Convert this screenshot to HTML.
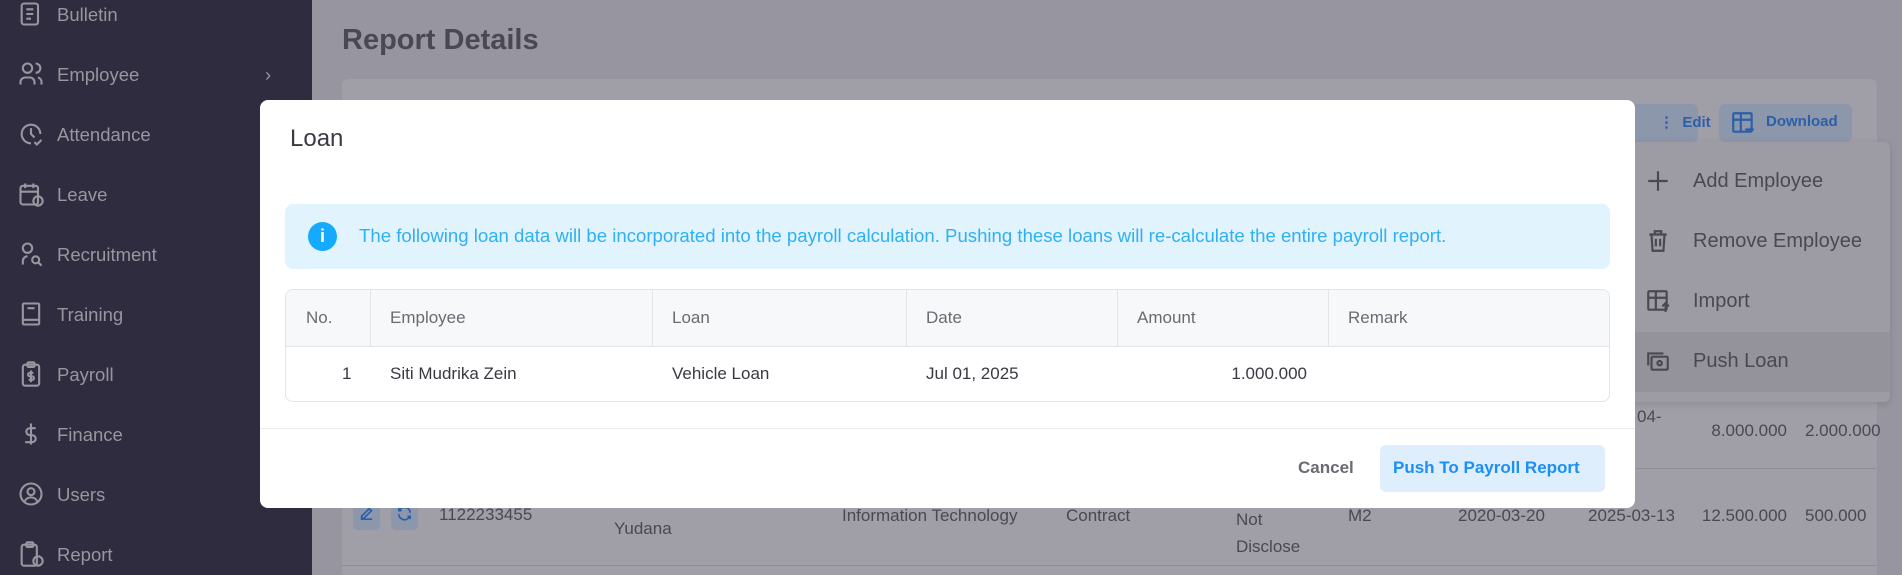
<!DOCTYPE html>
<html><head><meta charset="utf-8"><style>
*{box-sizing:border-box;margin:0;padding:0}
html{width:1902px;height:575px;overflow:hidden}
body{width:1902px;height:575px;overflow:hidden;position:relative;background:#97959f;font-family:"Liberation Sans",sans-serif}
.sb{position:absolute;left:0;top:0;width:312px;height:575px;background:#302c40}
.si{position:absolute;left:0;height:30px;width:312px;color:#98969f;font-size:18.5px}
.si svg{position:absolute;left:17px;top:0px}
.si span{position:absolute;left:57px;top:4px}
.abs{position:absolute}
.card{left:342px;top:79px;width:1535px;height:496px;background:#a09ea7;border-radius:6px 6px 0 0}
.modal{left:260px;top:100px;width:1375px;height:408px;background:#fff;border-radius:8px}
.t{position:absolute;white-space:nowrap}
</style></head><body>
<div class="sb">
<div class="si" style="top:0"><svg width="28" height="28" viewBox="0 0 24 24" fill="none" stroke="#98969f" stroke-width="1.8"><rect x="4" y="3" width="14" height="18" rx="2"/><path d="M8 8h6M8 12h6M8 16h4"/></svg><span>Bulletin</span></div>
<div class="si" style="top:60px"><svg width="28" height="28" viewBox="0 0 24 24" fill="none" stroke="#98969f" stroke-width="1.8"><circle cx="9" cy="7" r="4"/><path d="M3 21v-2a4 4 0 014-4h4a4 4 0 014 4v2M16 3a4 4 0 010 8M21 21v-2a4 4 0 00-3-4"/></svg><span>Employee</span><span style="left:265px">›</span></div>
<div class="si" style="top:120px"><svg width="28" height="28" viewBox="0 0 24 24" fill="none" stroke="#98969f" stroke-width="1.8"><path d="M20 12a8 8 0 10-8 8M12 7v5l3 3M15 19l2 2 4-4"/></svg><span>Attendance</span></div>
<div class="si" style="top:180px"><svg width="28" height="28" viewBox="0 0 24 24" fill="none" stroke="#98969f" stroke-width="1.8"><rect x="3" y="5" width="15" height="16" rx="2"/><path d="M3 10h15M7 3v4M14 3v4"/><circle cx="18" cy="18" r="4"/></svg><span>Leave</span></div>
<div class="si" style="top:240px"><svg width="28" height="28" viewBox="0 0 24 24" fill="none" stroke="#98969f" stroke-width="1.8"><circle cx="9" cy="7" r="4"/><path d="M5 21v-3a4 4 0 014-4"/><circle cx="16" cy="17" r="3"/><path d="M18 19l3 3"/></svg><span>Recruitment</span></div>
<div class="si" style="top:300px"><svg width="28" height="28" viewBox="0 0 24 24" fill="none" stroke="#98969f" stroke-width="1.8"><rect x="5" y="3" width="14" height="18" rx="1"/><path d="M5 17h14M9 7h6"/></svg><span>Training</span></div>
<div class="si" style="top:360px"><svg width="28" height="28" viewBox="0 0 24 24" fill="none" stroke="#98969f" stroke-width="1.8"><rect x="5" y="4" width="14" height="18" rx="2"/><rect x="9" y="2" width="6" height="4" rx="1"/><path d="M14 11h-3a1.5 1.5 0 000 3h2a1.5 1.5 0 010 3h-3M12 9v10"/></svg><span>Payroll</span></div>
<div class="si" style="top:420px"><svg width="28" height="28" viewBox="0 0 24 24" fill="none" stroke="#98969f" stroke-width="1.8"><path d="M16 7h-5a3 3 0 000 6h2a3 3 0 010 6H7M12 3v18"/></svg><span>Finance</span></div>
<div class="si" style="top:480px"><svg width="28" height="28" viewBox="0 0 24 24" fill="none" stroke="#98969f" stroke-width="1.8"><circle cx="12" cy="12" r="9"/><circle cx="12" cy="10" r="3"/><path d="M6.5 18.5a6 6 0 0111 0"/></svg><span>Users</span></div>
<div class="si" style="top:540px"><svg width="28" height="28" viewBox="0 0 24 24" fill="none" stroke="#98969f" stroke-width="1.8"><rect x="4" y="4" width="13" height="18" rx="2"/><rect x="8" y="2" width="6" height="4" rx="1"/><circle cx="18" cy="18" r="4"/></svg><span>Report</span></div>
</div>

<div class="t" style="left:342px;top:24px;font-size:29px;font-weight:bold;color:#4a4852">Report Details</div>
<div class="abs card"></div>
<div class="abs" style="left:1605px;top:104px;width:93px;height:38px;background:#8d97ab;border-radius:6px"></div>
<div class="t" style="left:1659px;top:113px;font-size:15px;font-weight:bold;color:#2b5fa8">⋮ &nbsp;Edit</div>
<div class="abs" style="left:1719px;top:104px;width:133px;height:38px;background:#8d97ab;border-radius:6px"></div>
<svg class="abs" style="left:1730px;top:110px" width="26" height="26" viewBox="0 0 24 24" fill="none" stroke="#2b5fa8" stroke-width="2"><rect x="3" y="3" width="17" height="17" rx="1"/><path d="M3 9h17M10 3v17M14 18h7M19 16l2 2-2 2"/></svg>
<div class="t" style="left:1766px;top:113px;font-size:15px;font-weight:bold;color:#2b5fa8">Download</div>
<div class="abs" style="left:1600px;top:142px;width:290px;height:260px;background:#9d9ba4;border-radius:6px;box-shadow:0 2px 8px rgba(0,0,0,.12)"></div>
<div class="abs" style="left:1600px;top:332px;width:290px;height:60px;background:#94929b"></div>
<svg class="abs" style="left:1645px;top:168px" width="26" height="26" viewBox="0 0 24 24" fill="none" stroke="#4a4852" stroke-width="2"><path d="M12 3v18M3 12h18"/></svg>
<svg class="abs" style="left:1645px;top:228px" width="26" height="26" viewBox="0 0 24 24" fill="none" stroke="#4a4852" stroke-width="2"><path d="M4 6h16M9 6V3h6v3M6 6l1 15h10l1-15M10 10v7M14 10v7"/></svg>
<svg class="abs" style="left:1645px;top:288px" width="26" height="26" viewBox="0 0 24 24" fill="none" stroke="#4a4852" stroke-width="2"><rect x="3" y="3" width="17" height="17" rx="1"/><path d="M3 9h17M10 3v17M19 22v-7M16 17l3-3 3 3"/></svg>
<svg class="abs" style="left:1645px;top:348px" width="26" height="26" viewBox="0 0 24 24" fill="none" stroke="#4a4852" stroke-width="2"><rect x="6" y="8" width="15" height="12" rx="1"/><path d="M3 16V5h14"/><circle cx="13.5" cy="14" r="2"/></svg>
<div class="t" style="left:1693px;top:170px;font-size:20px;color:#4a4852">Add Employee</div>
<div class="t" style="left:1693px;top:230px;font-size:20px;color:#4a4852">Remove Employee</div>
<div class="t" style="left:1693px;top:290px;font-size:20px;color:#4a4852">Import</div>
<div class="t" style="left:1693px;top:350px;font-size:20px;color:#4a4852">Push Loan</div>

<div class="t" style="left:1637px;top:407px;font-size:17px;color:#4a4852">04-</div>
<div class="t" style="left:1787px;top:421px;font-size:17px;color:#4a4852;transform:translateX(-100%)">8.000.000</div>
<div class="t" style="left:1805px;top:421px;font-size:17px;color:#4a4852">2.000.000</div>
<div class="abs" style="left:1636px;top:468px;width:241px;height:1px;background:#8e8c95"></div>
<div class="abs" style="left:342px;top:565px;width:1535px;height:1px;background:#8e8c95"></div>
<div class="abs" style="left:353px;top:500px;width:27px;height:30px;background:#8d97ab;border-radius:5px"></div>
<svg class="abs" style="left:358px;top:505px" width="17" height="17" viewBox="0 0 24 24" fill="none" stroke="#2b5fa8" stroke-width="2.4"><path d="M4 20h16M5 16l11-11 3 3-11 11H5z"/></svg>
<div class="abs" style="left:391px;top:500px;width:27px;height:30px;background:#8d97ab;border-radius:5px"></div>
<svg class="abs" style="left:396px;top:505px" width="17" height="17" viewBox="0 0 24 24" fill="none" stroke="#2b5fa8" stroke-width="2.4"><path d="M20 11a8 8 0 00-14-5l-2 2M4 13a8 8 0 0014 5l2-2M4 4v4h4M20 20v-4h-4"/></svg>
<div class="t" style="left:439px;top:505px;font-size:17px;color:#4a4852">1122233455</div>
<div class="t" style="left:614px;top:519px;font-size:17px;color:#4a4852">Yudana</div>
<div class="t" style="left:842px;top:506px;font-size:17px;color:#4a4852">Information Technology</div>
<div class="t" style="left:1066px;top:506px;font-size:17px;color:#4a4852">Contract</div>
<div class="t" style="left:1236px;top:506px;font-size:17px;color:#4a4852;line-height:27px">Not<br>Disclose</div>
<div class="t" style="left:1348px;top:506px;font-size:17px;color:#4a4852">M2</div>
<div class="t" style="left:1458px;top:506px;font-size:17px;color:#4a4852">2020-03-20</div>
<div class="t" style="left:1588px;top:506px;font-size:17px;color:#4a4852">2025-03-13</div>
<div class="t" style="left:1787px;top:506px;font-size:17px;color:#4a4852;transform:translateX(-100%)">12.500.000</div>
<div class="t" style="left:1805px;top:506px;font-size:17px;color:#4a4852">500.000</div>

<div class="abs modal">
<div class="t" style="left:30px;top:25px;font-size:24px;color:#3c3a44">Loan</div>
<div class="abs" style="left:25px;top:104px;width:1325px;height:65px;background:#e1f3fd;border-radius:8px"></div>
<div class="abs" style="left:48px;top:122px;width:29px;height:29px;border-radius:50%;background:#16aaff;color:#fff;font-weight:bold;font-size:18px;text-align:center;line-height:29px">i</div>
<div class="t" style="left:99px;top:125px;font-size:18.6px;color:#2fb0f4">The following loan data will be incorporated into the payroll calculation. Pushing these loans will re-calculate the entire payroll report.</div>
<div class="abs" style="left:25px;top:189px;width:1325px;height:113px;border:1px solid #e3e4e8;border-radius:8px;overflow:hidden">
 <div class="abs" style="left:0;top:0;width:1325px;height:57px;background:#f7f8fa;border-bottom:1px solid #e3e4e8"></div>
 <div class="abs" style="left:84px;top:0;width:1px;height:57px;background:#e3e4e8"></div>
 <div class="abs" style="left:366px;top:0;width:1px;height:57px;background:#e3e4e8"></div>
 <div class="abs" style="left:620px;top:0;width:1px;height:57px;background:#e3e4e8"></div>
 <div class="abs" style="left:831px;top:0;width:1px;height:57px;background:#e3e4e8"></div>
 <div class="abs" style="left:1042px;top:0;width:1px;height:57px;background:#e3e4e8"></div>
 <div class="t" style="left:20px;top:18px;font-size:17px;color:#6b6a72">No.</div>
 <div class="t" style="left:104px;top:18px;font-size:17px;color:#6b6a72">Employee</div>
 <div class="t" style="left:386px;top:18px;font-size:17px;color:#6b6a72">Loan</div>
 <div class="t" style="left:640px;top:18px;font-size:17px;color:#6b6a72">Date</div>
 <div class="t" style="left:851px;top:18px;font-size:17px;color:#6b6a72">Amount</div>
 <div class="t" style="left:1062px;top:18px;font-size:17px;color:#6b6a72">Remark</div>
 <div class="t" style="left:56px;top:74px;font-size:17px;color:#3a3841">1</div>
 <div class="t" style="left:104px;top:74px;font-size:17px;color:#3a3841">Siti Mudrika Zein</div>
 <div class="t" style="left:386px;top:74px;font-size:17px;color:#3a3841">Vehicle Loan</div>
 <div class="t" style="left:640px;top:74px;font-size:17px;color:#3a3841">Jul 01, 2025</div>
 <div class="t" style="left:1021px;top:74px;font-size:17px;color:#3a3841;transform:translateX(-100%)">1.000.000</div>
</div>
<div class="abs" style="left:0;top:328px;width:1375px;height:1px;background:#ececef"></div>
<div class="t" style="left:1038px;top:358px;font-size:17px;font-weight:bold;color:#6b6a72">Cancel</div>
<div class="abs" style="left:1120px;top:345px;width:225px;height:47px;background:#dfeefd;border-radius:6px"></div>
<div class="t" style="left:1133px;top:358px;font-size:17px;font-weight:bold;color:#1a8ff5">Push To Payroll Report</div>
</div>
</body></html>
